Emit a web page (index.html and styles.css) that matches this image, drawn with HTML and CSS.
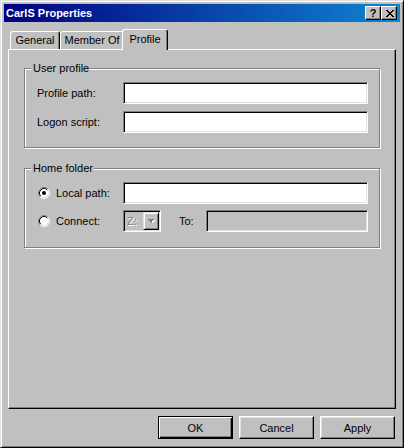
FILE: index.html
```html
<!DOCTYPE html>
<html>
<head>
<meta charset="utf-8">
<title>CarlS Properties</title>
<link rel="stylesheet" href="styles.css">
</head>
<body>
<div class="window">
  <div class="titlebar">
    <span class="title">CarlS Properties</span>
    <div class="caption-buttons">
      <div class="cap-btn help">?</div>
      <div class="cap-btn close">
        <svg width="8" height="7" viewBox="0 0 8 7" shape-rendering="crispEdges"><path fill="#000" d="M0 0h2v1h-2z M6 0h2v1h-2z M1 1h2v1h-2z M5 1h2v1h-2z M2 2h4v1h-4z M3 3h2v1h-2z M2 4h4v1h-4z M1 5h2v1h-2z M5 5h2v1h-2z M0 6h2v1h-2z M6 6h2v1h-2z"/></svg>
      </div>
    </div>
  </div>
  <div class="body">
    <div class="tabs">
      <div class="tab t-general">General</div>
      <div class="tab t-member">Member Of</div>
      <div class="tab t-profile active">Profile</div>
    </div>
    <div class="panel">
      <div class="group">
        <div class="legend">User profile</div>
        <div class="rows">
          <div class="label">Profile path:</div>
          <div class="field"></div>
          <div class="label">Logon script:</div>
          <div class="field"></div>
        </div>
      </div>
      <div class="group group-home">
        <div class="legend">Home folder</div>
        <div class="rows home-rows">
          <div class="radio-label">
            <svg class="radio" width="12" height="12" viewBox="0 0 12 12">
              <circle cx="6" cy="6" r="5" fill="#fff"/>
              <path d="M2.11 9.89 A5.5 5.5 0 0 1 9.89 2.11" fill="none" stroke="#808080"/>
              <path d="M9.89 2.11 A5.5 5.5 0 0 1 2.11 9.89" fill="none" stroke="#fff"/>
              <path d="M2.82 9.18 A4.5 4.5 0 0 1 9.18 2.82" fill="none" stroke="#000"/>
              <path d="M9.18 2.82 A4.5 4.5 0 0 1 2.82 9.18" fill="none" stroke="#dfdfdf"/>
              <circle cx="6" cy="6" r="2" fill="#000"/>
            </svg>
            <span>Local path:</span>
          </div>
          <div class="field"></div>
          <div class="radio-label">
            <svg class="radio" width="12" height="12" viewBox="0 0 12 12">
              <circle cx="6" cy="6" r="5" fill="#fff"/>
              <path d="M2.11 9.89 A5.5 5.5 0 0 1 9.89 2.11" fill="none" stroke="#808080"/>
              <path d="M9.89 2.11 A5.5 5.5 0 0 1 2.11 9.89" fill="none" stroke="#fff"/>
              <path d="M2.82 9.18 A4.5 4.5 0 0 1 9.18 2.82" fill="none" stroke="#000"/>
              <path d="M9.18 2.82 A4.5 4.5 0 0 1 2.82 9.18" fill="none" stroke="#dfdfdf"/>
            </svg>
            <span>Connect:</span>
          </div>
          <div class="connect">
            <div class="combo">
              <span class="combo-text">Z:</span>
              <div class="dd">
                <svg width="7" height="5" viewBox="0 0 8 5" shape-rendering="crispEdges"><path fill="#fff" d="M1 1h7v1h-7z M2 2h5v1h-5z M3 3h3v1h-3z M4 4h1v1h-1z"/><path fill="#808080" d="M0 0h7v1h-7z M1 1h5v1h-5z M2 2h3v1h-3z M3 3h1v1h-1z"/></svg>
              </div>
            </div>
            <span class="to">To:</span>
            <div class="field disabled"></div>
          </div>
        </div>
      </div>
    </div>
    <div class="footer">
      <div class="btn default">OK</div>
      <div class="btn">Cancel</div>
      <div class="btn">Apply</div>
    </div>
  </div>
</div>
</body>
</html>
```

FILE: styles.css
```css
* { box-sizing: border-box; }

body {
  margin: 0;
  background: #c0c0c0;
  font-family: "Liberation Sans", Arial, sans-serif;
  font-size: 11px;
  color: #000;
}

.window {
  width: 404px;
  height: 448px;
  background: #c0c0c0;
  border: 1px solid;
  border-color: #dfdfdf #000 #000 #dfdfdf;
  box-shadow: inset 1px 1px 0 #fff, inset -1px -1px 0 #808080;
  padding: 3px;
  display: flex;
  flex-direction: column;
}

.titlebar {
  height: 18px;
  flex: none;
  background: linear-gradient(to right, #000080, #1084d0);
  display: flex;
  align-items: center;
  justify-content: space-between;
  padding: 0 3px 0 2px;
  color: #fff;
  font-weight: bold;
}

.title { line-height: 18px; }

.caption-buttons { display: flex; }

.cap-btn {
  width: 16px;
  height: 14px;
  background: #c0c0c0;
  border: 1px solid;
  border-color: #fff #000 #000 #fff;
  box-shadow: inset -1px -1px 0 #808080;
  display: flex;
  align-items: center;
  justify-content: center;
  color: #000;
  font-weight: bold;
  font-size: 11px;
  line-height: 12px;
}

.close svg { display: block; margin-left: 1px; }

.body {
  flex: 1;
  padding: 7px 4px 0 4px;
  display: flex;
  flex-direction: column;
}

.tabs {
  display: flex;
  align-items: flex-end;
  height: 20px;
  padding-left: 2px;
  position: relative;
  z-index: 1;
}

.tab {
  height: 18px;
  background: #c0c0c0;
  border-left: 1px solid #fff;
  border-top: 1px solid #fff;
  border-right: 1px solid #000;
  box-shadow: inset -1px 0 0 #808080;
  border-radius: 3px 3px 0 0;
  display: flex;
  align-items: center;
  justify-content: center;
  padding-bottom: 1px;
}

.t-general { width: 50px; }
.t-member { width: 64px; }
.t-profile { width: 46px; }

.tab.active {
  height: 21px;
  margin-left: -2px;
  margin-bottom: -1px;
  padding-bottom: 3px;
}

.panel {
  height: 360px;
  flex: none;
  border: 1px solid;
  border-color: #fff #000 #000 #fff;
  box-shadow: inset -1px -1px 0 #808080;
  padding: 18px 15px 0 15px;
}

.group {
  height: 80px;
  border: 1px solid #808080;
  box-shadow: inset 1px 1px 0 #fff, 1px 1px 0 #fff;
}

.group-home { margin-top: 20px; }

.legend {
  width: fit-content;
  height: 13px;
  line-height: 13px;
  margin: -7px 0 0 6px;
  padding: 0 1px 0 2px;
  background: #c0c0c0;
}

.rows {
  display: grid;
  grid-template-columns: 86px 1fr;
  grid-auto-rows: 22px;
  row-gap: 7px;
  align-items: center;
  margin-top: 7px;
  padding: 0 11px 0 12px;
}

.home-rows {
  grid-template-columns: 85px 1fr;
  row-gap: 6px;
  padding-left: 13px;
}

.radio-label {
  display: flex;
  align-items: center;
}

.radio { display: block; margin-right: 6px; flex: none; }

.field {
  height: 22px;
  background: #fff;
  border: 1px solid;
  border-color: #808080 #fff #fff #808080;
  box-shadow: inset 1px 1px 0 #000, inset -1px -1px 0 #dfdfdf;
}

.field.disabled { background: #c0c0c0; flex: 1; }

.connect {
  display: flex;
  align-items: center;
  height: 22px;
}

.combo {
  width: 38px;
  height: 22px;
  flex: none;
  display: flex;
  padding: 1px;
  background: #c0c0c0;
  border: 1px solid;
  border-color: #808080 #fff #fff #808080;
  box-shadow: inset 1px 1px 0 #000, inset -1px -1px 0 #dfdfdf;
}

.combo-text {
  flex: 1;
  padding-left: 2px;
  line-height: 18px;
  color: #808080;
  text-shadow: 1px 1px 0 #fff;
}

.dd {
  width: 16px;
  height: 18px;
  background: #c0c0c0;
  border: 1px solid;
  border-color: #dfdfdf #000 #000 #dfdfdf;
  box-shadow: inset 1px 1px 0 #fff, inset -1px -1px 0 #808080;
  display: flex;
  align-items: center;
  justify-content: center;
}

.dd svg { display: block; }

.to {
  width: 27px;
  margin-left: 18px;
  flex: none;
}

.footer {
  display: flex;
  justify-content: flex-end;
  gap: 6px;
  margin-top: 7px;
  padding-right: 1px;
}

.btn {
  width: 75px;
  height: 23px;
  background: #c0c0c0;
  border: 1px solid;
  border-color: #fff #000 #000 #fff;
  box-shadow: inset -1px -1px 0 #808080, inset 1px 1px 0 #dfdfdf;
  display: flex;
  align-items: center;
  justify-content: center;
}

.btn.default {
  border-color: #000;
  box-shadow: inset 1px 1px 0 #fff, inset -1px -1px 0 #000, inset -2px -2px 0 #808080;
}
```
